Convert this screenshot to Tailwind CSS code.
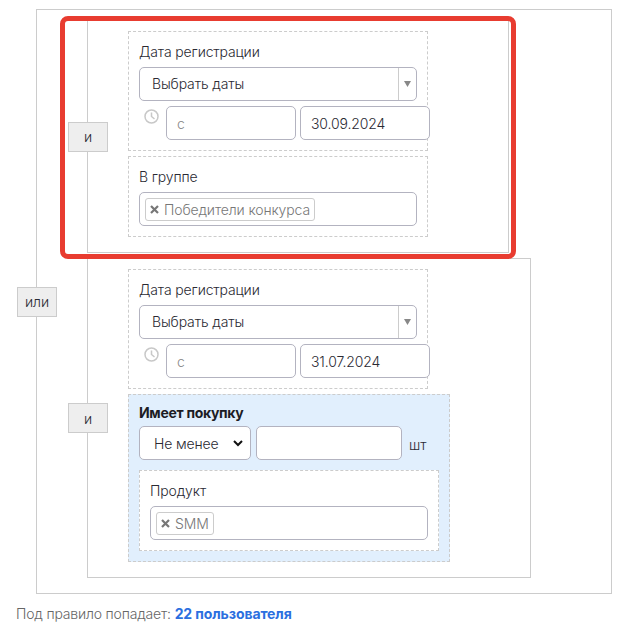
<!DOCTYPE html>
<html lang="ru"><head><meta charset="utf-8"><script src="https://cdn.jsdelivr.net/npm/@tailwindcss/browser@4"></script></head>
<body class="bg-white font-['Inter',sans-serif] font-[350] text-[14px] tracking-[-0.13px] text-[#2a2a33]">
<div class="relative w-[636px] h-[636px] overflow-hidden pt-[9px] pl-[36px]">
  <div class="relative w-[576px] h-[585px] border border-[#ccc] pt-[10px] pl-[50px]">
    <div class="absolute left-[-20px] top-1/2 -translate-y-1/2 w-[40px] h-[30px] bg-[#eee] border border-[#ccc] flex items-center justify-center">или</div>
    <div class="relative w-[422px] h-[233px] border border-[#ccc] pt-[10px] pl-[40px] flex flex-col gap-[5px]">
      <div class="absolute left-[-20px] top-1/2 -translate-y-1/2 w-[40px] h-[30px] bg-[#eee] border border-[#ccc] flex items-center justify-center">и</div>
      <div class="w-[300px] h-[120px] border border-dashed border-[#ccc] p-[10px]">
        <div class="h-[20px] leading-[20px] mb-[5px]">Дата регистрации</div>
        <div class="w-[278px] h-[34px] border border-[#b3b3c0] rounded-[5px] flex items-center bg-white">
          <span class="flex-1 pl-[12px] -mt-[1px]">Выбрать даты</span>
          <span class="w-[18px] h-full border-l border-[#ccc] flex items-center justify-center"><svg width="7" height="6" viewBox="0 0 7 6"><path d="M0 0H7L3.5 6Z" fill="#888"/></svg></span>
        </div>
        <div class="flex mt-[5px] ml-[5px] w-[291px]">
          <svg class="shrink-0 mt-[3px] mr-[7px]" width="15" height="15" viewBox="0 0 15 15" fill="none" stroke="#c8c8c8" stroke-width="1.5"><circle cx="7.5" cy="7.5" r="6.5"/><path d="M7.5 3.5V7.5L10.5 10"/></svg>
          <input placeholder="с" class="shrink-0 w-[130px] h-[34px] border border-[#b3b3c0] rounded-[5px] px-[10px] placeholder:text-[#888] bg-white">
          <input value="30.09.2024" class="shrink-0 ml-[4px] w-[130px] h-[34px] border border-[#b3b3c0] rounded-[5px] pl-[10px] pr-[9px] bg-white">
        </div>
      </div>
      <div class="w-[300px] h-[81px] border border-dashed border-[#ccc] p-[10px]">
        <div class="h-[20px] leading-[20px] mb-[5px]">В группе</div>
        <div class="w-[278px] h-[34px] border border-[#b3b3c0] rounded-[5px] flex items-center px-[5px] bg-white">
          <span class="h-[23px] border border-[#ccc] rounded-[3px] flex items-center pl-[4px] pr-[4px] gap-[5px] text-[#777]"><svg width="9" height="9" viewBox="0 0 9 9" stroke="#777" stroke-width="2.2"><path d="M1 1L8 8M8 1L1 8"/></svg>Победители конкурса</span>
        </div>
      </div>
    </div>
    <div class="relative w-[444px] h-[320px] mt-[5px] border border-[#ccc] pt-[10px] pl-[40px] flex flex-col gap-[5px]">
      <div class="absolute left-[-20px] top-1/2 -translate-y-1/2 w-[40px] h-[30px] bg-[#eee] border border-[#ccc] flex items-center justify-center">и</div>
      <div class="w-[300px] h-[120px] border border-dashed border-[#ccc] p-[10px]">
        <div class="h-[20px] leading-[20px] mb-[5px]">Дата регистрации</div>
        <div class="w-[278px] h-[34px] border border-[#b3b3c0] rounded-[5px] flex items-center bg-white">
          <span class="flex-1 pl-[12px] -mt-[1px]">Выбрать даты</span>
          <span class="w-[18px] h-full border-l border-[#ccc] flex items-center justify-center"><svg width="7" height="6" viewBox="0 0 7 6"><path d="M0 0H7L3.5 6Z" fill="#888"/></svg></span>
        </div>
        <div class="flex mt-[5px] ml-[5px] w-[291px]">
          <svg class="shrink-0 mt-[3px] mr-[7px]" width="15" height="15" viewBox="0 0 15 15" fill="none" stroke="#c8c8c8" stroke-width="1.5"><circle cx="7.5" cy="7.5" r="6.5"/><path d="M7.5 3.5V7.5L10.5 10"/></svg>
          <input placeholder="с" class="shrink-0 w-[130px] h-[34px] border border-[#b3b3c0] rounded-[5px] px-[10px] placeholder:text-[#888] bg-white">
          <input value="31.07.2024" class="shrink-0 ml-[4px] w-[130px] h-[34px] border border-[#b3b3c0] rounded-[5px] pl-[10px] pr-[9px] bg-white">
        </div>
      </div>
      <div class="w-[322px] h-[168px] border border-dashed border-[#ccc] bg-[#e1effd] pt-[10px] pl-[10px]">
        <div class="h-[16px] leading-[16px] mb-[5px] font-bold tracking-[-0.3px] text-[#1c1c24]">Имеет покупку</div>
        <div class="flex items-center gap-[5px]">
          <div class="w-[112px] h-[34px] border border-[#b3b3c0] rounded-[5px] bg-white flex items-center pl-[14px] pr-[7px] justify-between"><span>Не менее</span><svg width="10" height="7" viewBox="0 0 10 7" fill="none" stroke="#111" stroke-width="2"><path d="M1 1L5 5L9 1"/></svg></div>
          <input class="w-[146px] h-[34px] border border-[#b3b3c0] rounded-[5px] bg-white">
          <span class="ml-[2px] mt-[3px]">шт</span>
        </div>
        <div class="w-[300px] h-[81px] mt-[10px] border border-dashed border-[#ccc] bg-white p-[10px]">
          <div class="h-[20px] leading-[20px] mb-[5px]">Продукт</div>
          <div class="w-[278px] h-[34px] border border-[#b3b3c0] rounded-[5px] flex items-center px-[5px] bg-white">
            <span class="h-[23px] border border-[#ccc] rounded-[3px] flex items-center px-[4px] gap-[5px] text-[#777]"><svg width="9" height="9" viewBox="0 0 9 9" stroke="#777" stroke-width="2.2"><path d="M1 1L8 8M8 1L1 8"/></svg>SMM</span>
          </div>
        </div>
      </div>
    </div>
  </div>
  <div class="absolute left-[16px] top-[604px] leading-[20px] tracking-[-0.18px] text-[#666]">Под правило попадает: <span class="font-bold tracking-[-0.1px] text-[#2b6fe0]">22 пользователя</span></div>
  <div class="absolute left-[60px] top-[16px] w-[456px] h-[243px] border-[5px] border-[#e83c30] rounded-[8px]"></div>
</div>
</body></html>
